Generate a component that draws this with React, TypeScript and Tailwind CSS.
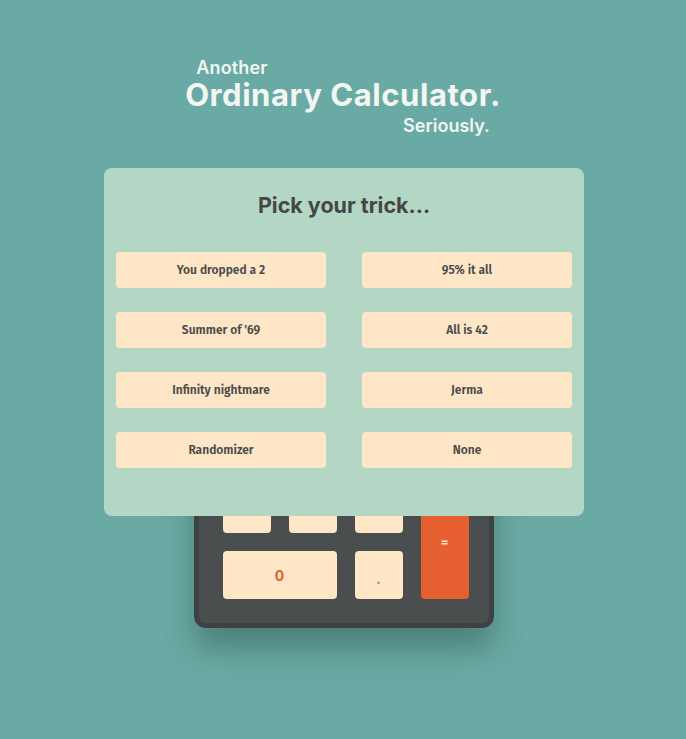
import React from 'react';

const tricks = [
  'You dropped a 2',
  '95% it all',
  "Summer of '69",
  'All is 42',
  'Infinity nightmare',
  'Jerma',
  'Randomizer',
  'None',
];

const Key = ({ label, op = false, className = '' }: { label: string; op?: boolean; className?: string }) => (
  <div
    className={`flex items-center justify-center rounded-[4px] font-bold ${
      op ? 'bg-[#e55f30] text-[12px] text-[#fee6c7]' : 'bg-[#fee6c7] text-[14px] text-[#e55f30]'
    } ${className}`}
  >
    {label}
  </div>
);

const App: React.FC = () => {
  return (
    <div
      className="relative min-h-[739px] w-full overflow-hidden bg-[#6aaaa4]"
      style={{ fontFamily: 'Inter, "Noto Sans", sans-serif' }}
    >
      {/* Header */}
      <div className="flex justify-center pt-[56px]">
        <div className="flex flex-col text-[#f2f7f3]">
          <span className="self-start pl-[11px] text-[18px] font-semibold leading-[24px] tracking-[0.01em]">Another</span>
          <span className="-mt-[3px] text-[31px] font-bold leading-[36px] tracking-[0.018em]">Ordinary Calculator.</span>
          <span className="mt-[2px] self-end pr-[11px] text-[18px] font-semibold leading-[22px]">Seriously.</span>
        </div>
      </div>

      {/* Calculator */}
      <div className="mt-[43px] flex justify-center">
        <div className="ml-[1px] w-[300px] rounded-[12px] border-[5px] border-[#3e4243] bg-[#4a4e4f] pb-[24px] pl-[24px] pr-[19px] pt-[24px] shadow-[0_20px_30px_rgba(40,80,76,0.45)]">
          <div className="mb-[18px] flex h-[60px] items-center justify-end rounded-[4px] bg-[#3a3d3e] px-3 text-[28px] font-bold text-[#fee6c7]">
            0
          </div>
          <div className="grid grid-cols-[48px_48px_48px_48px] grid-rows-[48px_48px_48px_48px_48px] gap-[18px]">
            <Key label="C" />
            <Key label="±" />
            <Key label="%" />
            <Key label="÷" op />
            <Key label="7" />
            <Key label="8" />
            <Key label="9" />
            <Key label="×" op />
            <Key label="4" />
            <Key label="5" />
            <Key label="6" />
            <Key label="−" op />
            <Key label="1" />
            <Key label="2" />
            <Key label="3" />
            <Key label="=" op className="row-span-2" />
            <Key label="0" className="col-span-2" />
            <Key label="." className="pt-[6px]" />
          </div>
        </div>
      </div>

      {/* Trick picker modal */}
      <div className="absolute left-[104px] top-[168px] h-[348px] w-[480px] rounded-[8px] bg-[#b4d6c4] px-[12px] pt-[23px]">
        <h2 className="text-center text-[21.5px] font-bold leading-[28px] text-[#454747]">Pick your trick...</h2>
        <div
          className="mt-[33px] grid grid-cols-2 gap-x-[36px] gap-y-[24px]"
          style={{ fontFamily: '"Fira Sans", Lato, sans-serif' }}
        >
          {tricks.map((t) => (
            <button
              key={t}
              className="flex h-[36px] items-center justify-center rounded-[4px] bg-[#fee6c7] text-[12px] font-semibold text-[#4a4a4a]"
            >
              {t}
            </button>
          ))}
        </div>
      </div>
    </div>
  );
};

export default App;
